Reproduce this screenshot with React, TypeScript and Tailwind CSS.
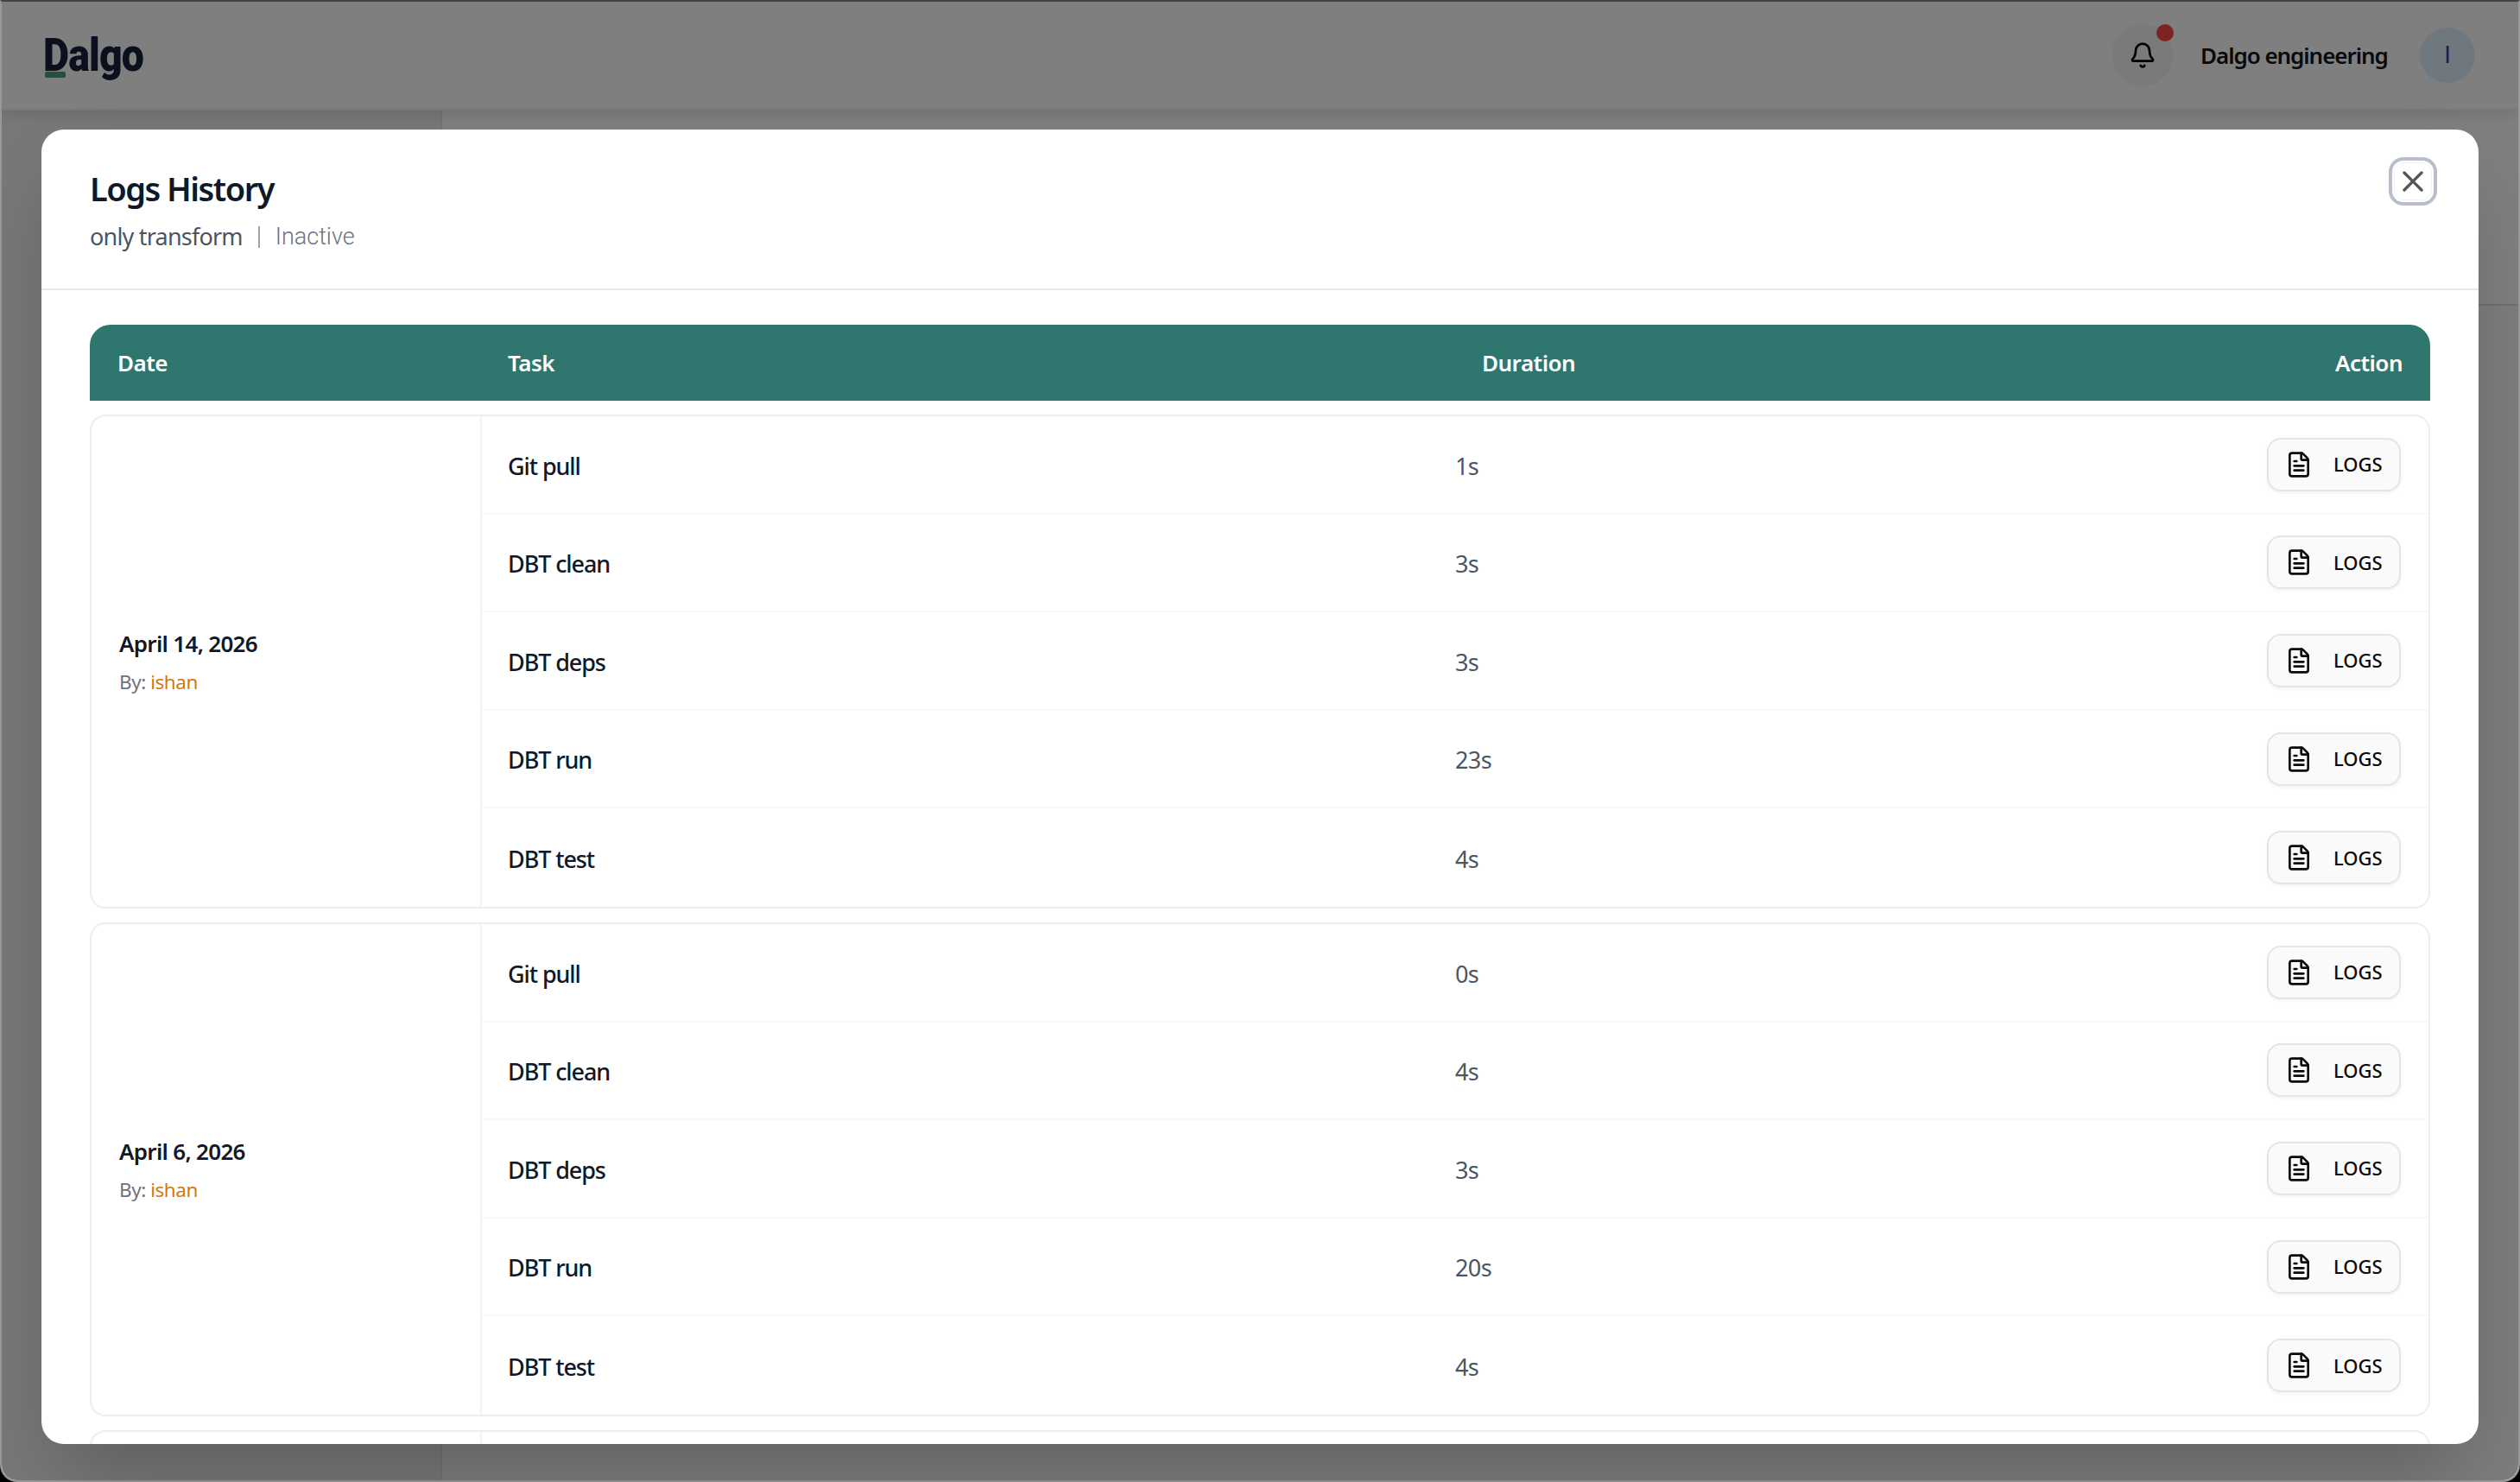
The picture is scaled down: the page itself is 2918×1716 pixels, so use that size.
import React from 'react';
import { Bell, FileText, X } from 'lucide-react';

const FONT = "font-['Noto_Sans',sans-serif]";

const LOG_GROUPS = [
    {
        date: 'April 14, 2026',
        by: 'ishan',
        rows: [
            { task: 'Git pull', duration: '1s' },
            { task: 'DBT clean', duration: '3s' },
            { task: 'DBT deps', duration: '3s' },
            { task: 'DBT run', duration: '23s' },
            { task: 'DBT test', duration: '4s' },
        ],
    },
    {
        date: 'April 6, 2026',
        by: 'ishan',
        rows: [
            { task: 'Git pull', duration: '0s' },
            { task: 'DBT clean', duration: '4s' },
            { task: 'DBT deps', duration: '3s' },
            { task: 'DBT run', duration: '20s' },
            { task: 'DBT test', duration: '4s' },
        ],
    },
];

function TopBar() {
    return (
        <header className="relative flex h-[126px] shrink-0 items-center justify-between border-b-2 border-[#f0f0f0] bg-white pl-[48px] pr-[50px] shadow-[0_4px_16px_rgba(0,0,0,0.12)]">
            <div className="relative top-[3px] h-[48px] w-[120px]">
                <span className="absolute left-0 top-[-9px] origin-left scale-x-[0.86] font-['Roboto',sans-serif] text-[54px] font-black leading-[60px] tracking-[-1px] text-[#14203c]">
                    Dalgo
                </span>
                <span className="absolute bottom-[1px] left-[2px] h-[7px] w-[24px] rounded-[2px] bg-[#4a9e84]" />
            </div>
            <div className="flex items-center">
                <div className="relative flex h-[72px] w-[72px] items-center justify-center rounded-full bg-[#f5f5f5]">
                    <Bell size={32} strokeWidth={2} className="text-black" />
                    <span className="absolute right-0 top-0 h-[20px] w-[20px] rounded-full bg-[#fe4444]" />
                </div>
                <span className="ml-[31px] w-[218px] whitespace-nowrap text-[26px] font-semibold tracking-[-1.05px] text-[#141414]">Dalgo engineering</span>
                <div className="ml-[36px] flex h-[64px] w-[64px] items-center justify-center rounded-full bg-[#dfeeff] font-['Roboto',sans-serif] text-[28px] text-[#2340b0]">
                    I
                </div>
            </div>
        </header>
    );
}

function LogsButton() {
    return (
        <button className="flex h-[62px] w-[155px] items-center rounded-[16px] border-2 border-[#e5e5e5] bg-[#fafafa] pl-[19px] shadow-[0_2px_4px_rgba(0,0,0,0.05)]">
            <FileText size={32} strokeWidth={2} className="text-[#0a0a0a]" />
            <span className="ml-[24px] text-[22px] font-medium tracking-[0] text-[#0a0a0a]">LOGS</span>
        </button>
    );
}

function LogCard({ date, by, rows }: (typeof LOG_GROUPS)[number]) {
    return (
        <div className="flex h-[572px] shrink-0 overflow-hidden rounded-[18px] border-2 border-[#eeeef2]">
            <div className="flex w-[452px] shrink-0 flex-col justify-center border-r-2 border-[#f3f3f6] pl-[32px]">
                <div className="text-[26px] font-semibold leading-[40px] tracking-[-0.7px] text-[#111827]">{date}</div>
                <div className="mt-[7px] text-[22.5px] leading-[36px] tracking-[-0.45px] text-[#6b7280]">
                    By: <span className="text-[#d97706]">{by}</span>
                </div>
            </div>
            <div className="flex flex-1 flex-col">
                {rows.map((row, i) => (
                    <div
                        key={row.task}
                        className={`flex h-[114px] items-center pl-[30px] pr-[32px] ${i < rows.length - 1 ? 'border-b-2 border-[#f8f8fa]' : ''}`}
                    >
                        <div className="w-[1097px] pt-[4px] text-[27px] font-medium tracking-[-1.1px] text-[#111827]">{row.task}</div>
                        <div className="flex-1 pt-[4px] text-[27px] tracking-[-0.6px] text-[#4b5563]">{row.duration}</div>
                        <LogsButton />
                    </div>
                ))}
            </div>
        </div>
    );
}

function LogsModal() {
    return (
        <div className="absolute inset-x-[48px] bottom-[44px] top-[150px] flex flex-col overflow-hidden rounded-[26px] bg-white shadow-[0_50px_100px_-24px_rgba(0,0,0,0.25)]">
            <div className="relative h-[186px] shrink-0 border-b-2 border-[#e5e7eb] pl-[56px] pt-[42px]">
                <h2 className="text-[38px] font-semibold leading-[52px] tracking-[-1.5px] text-[#111827]">Logs History</h2>
                <div className="mt-[10px] flex items-center text-[27px] leading-[40px] tracking-[-0.8px]">
                    <span className="text-[#4b5563]">only transform</span>
                    <span className="mx-[18px] h-[25px] w-[2px] bg-[#9ca3af]" />
                    <span className="font-['Roboto',sans-serif] font-light tracking-[0] text-[#6b7280]">Inactive</span>
                </div>
                <button className="absolute right-[48px] top-[32px] flex h-[56px] w-[56px] items-center justify-center rounded-[17px] border-[4px] border-[#b8bfca] bg-white">
                    <span className="absolute inset-[2px] rounded-[11px] border border-[#f2f2f2]" />
                    <X size={40} strokeWidth={2} className="relative text-[#555555]" />
                </button>
            </div>
            <div className="flex min-h-0 flex-1 flex-col gap-[16px] overflow-hidden px-[56px] pt-[40px]">
                <div className="grid h-[88px] shrink-0 grid-cols-[452px_1128px_1fr_auto] items-center rounded-t-[24px] bg-[#2f766e] text-[26px] font-semibold tracking-[-0.5px] text-white">
                    <div className="pl-[32px]">Date</div>
                    <div className="pl-[32px]">Task</div>
                    <div className="pl-[32px]">Duration</div>
                    <div className="pr-[32px] text-right">Action</div>
                </div>
                {LOG_GROUPS.map((group) => (
                    <LogCard key={group.date} {...group} />
                ))}
                <div className="h-[572px] shrink-0 rounded-[18px] border-2 border-[#eeeef2]">
                    <div className="ml-[450px] h-full w-[2px] bg-[#f3f3f6]" />
                </div>
            </div>
        </div>
    );
}

export default function App() {
    return (
        <div className="h-[1716px] w-[2918px] overflow-hidden bg-black">
            <div className={`relative flex h-full w-full flex-col overflow-hidden rounded-b-[20px] border-x-2 border-b-2 border-t-2 border-x-[#999999] border-b-[#999999] border-t-[#444444] bg-white ${FONT}`}>
                <TopBar />
                <div className="flex min-h-0 flex-1">
                    <aside className="w-[510px] shrink-0 border-r-2 border-[#e8e8e8] bg-[#f0f0f0]" />
                    <main className="flex-1 bg-white">
                        <div className="h-[226px] border-b-2 border-[#e0e0e0]" />
                        <div className="h-full bg-[#f8fbf9]" />
                    </main>
                </div>
                <div className="absolute inset-0 bg-black/50" />
            </div>
            <div className={`absolute left-0 top-0 h-[1716px] w-[2918px] ${FONT}`}>
                <LogsModal />
            </div>
        </div>
    );
}
